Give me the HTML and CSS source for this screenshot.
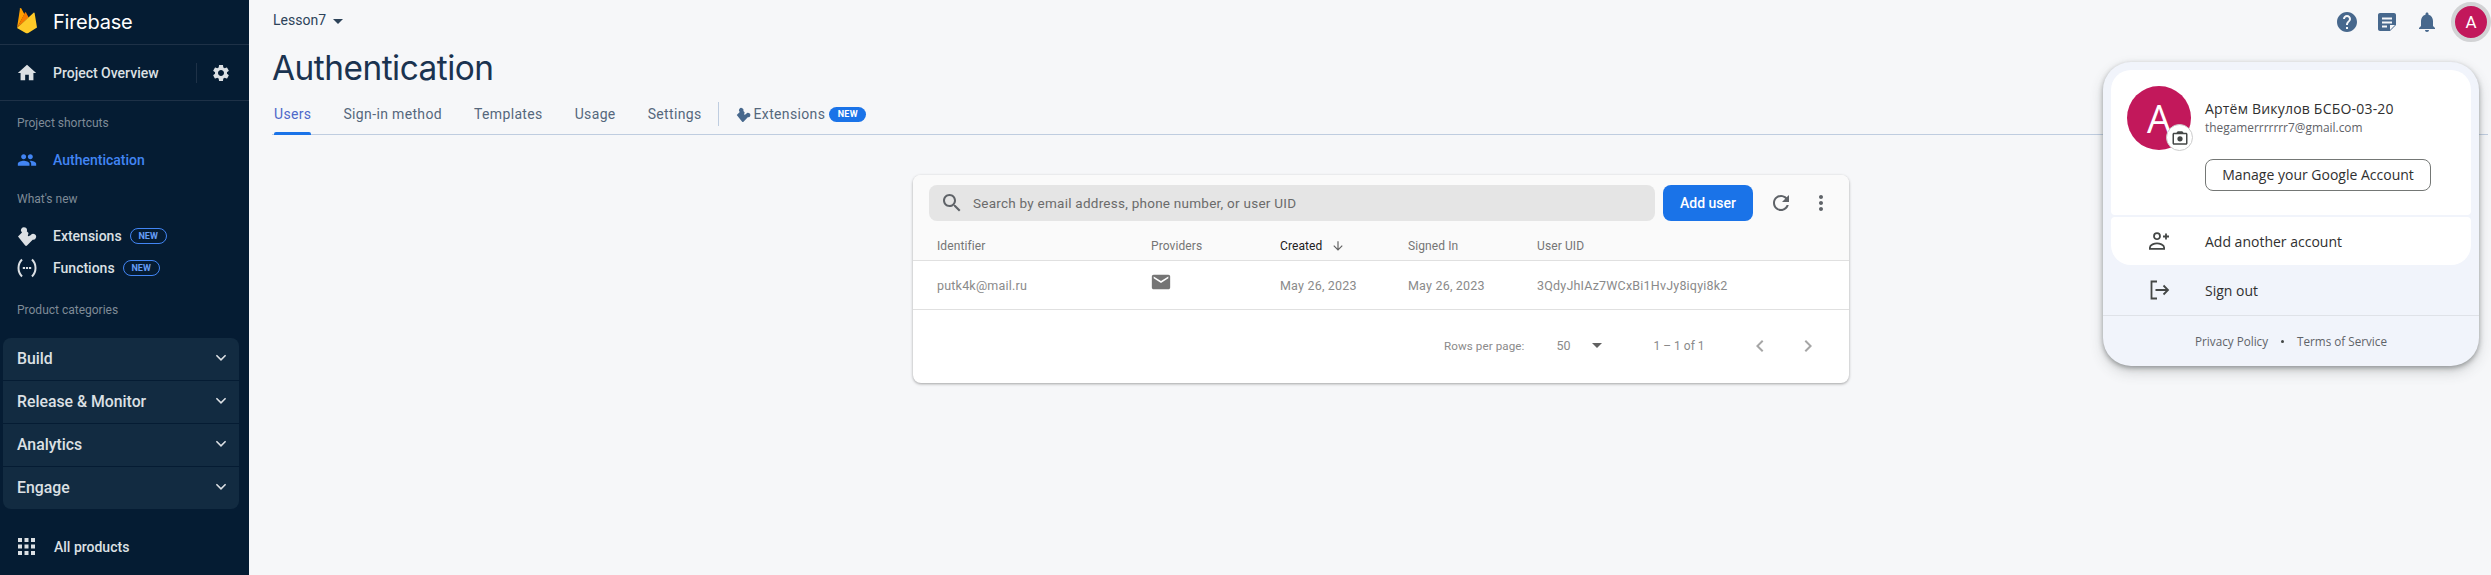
FILE: index.html
```html
<!DOCTYPE html>
<html lang="en">
<head>
<meta charset="utf-8">
<title>Authentication - Firebase</title>
<link rel="stylesheet" href="styles.css">
</head>
<body>
<div class="app">
  <aside class="sidebar">
    <div class="brand">
      <svg class="flame" viewBox="0 0 20 27" width="20" height="27"><path fill="#ffa000" d="M0 21 3 1.5c.1-.6.9-.7 1.2-.2L7.4 7.3 0 21z"/><path fill="#f57c00" d="M11.7 10.6 9 5.6c-.2-.4-.8-.4-1 0L0 21l11.7-10.4z"/><path fill="#ffca28" d="M20 20.6 17.6 6c-.1-.5-.7-.7-1-.3L0 21l8.7 4.9c.8.4 1.800.4 2.600 0L20 20.6z"/></svg>
      <span class="brand-name">Firebase</span>
    </div>
    <div class="overview">
      <svg class="icon home" viewBox="0 0 24 24"><path d="M10 20v-6h4v6h5v-8h3L12 3 2 12h3v8z"/></svg>
      <span class="overview-label">Project Overview</span>
      <span class="overview-div"></span>
      <svg class="icon gear" viewBox="0 0 24 24"><path d="M19.14 12.94c.04-.3.06-.61.06-.94 0-.32-.02-.64-.07-.94l2.03-1.58c.18-.14.23-.41.12-.61l-1.92-3.32c-.12-.22-.37-.29-.59-.22l-2.39.96c-.5-.38-1.03-.7-1.62-.94l-.36-2.54c-.04-.24-.24-.41-.48-.41h-3.84c-.24 0-.43.17-.47.41l-.36 2.54c-.59.24-1.13.57-1.62.94l-2.39-.96c-.22-.08-.47 0-.59.22L2.74 8.87c-.12.21-.08.47.12.61l2.03 1.58c-.05.3-.09.63-.09.94s.02.64.07.94l-2.03 1.58c-.18.14-.23.41-.12.61l1.92 3.32c.12.22.37.29.59.22l2.39-.96c.5.38 1.03.7 1.62.94l.36 2.54c.05.24.24.41.48.41h3.84c.24 0 .44-.17.47-.41l.36-2.54c.59-.24 1.13-.56 1.62-.94l2.39.96c.22.08.47 0 .59-.22l1.92-3.32c.12-.22.07-.47-.12-.61l-2.01-1.58zM12 15.6c-1.98 0-3.6-1.62-3.6-3.6s1.62-3.6 3.6-3.6 3.6 1.62 3.6 3.6-1.62 3.6-3.6 3.6z"/></svg>
    </div>
    <div class="side-head first">Project shortcuts</div>
    <div class="side-item active">
      <svg class="icon" viewBox="0 0 24 24"><path d="M16 11c1.66 0 2.99-1.34 2.99-3S17.66 5 16 5c-1.66 0-3 1.34-3 3s1.34 3 3 3zm-8 0c1.66 0 2.99-1.34 2.99-3S9.66 5 8 5C6.34 5 5 6.34 5 8s1.34 3 3 3zm0 2c-2.33 0-7 1.17-7 3.5V19h14v-2.5c0-2.33-4.67-3.5-7-3.500zm8 0c-.29 0-.62.02-.97.05 1.16.84 1.970 1.970 1.970 3.450V19h6v-2.500c0-2.330-4.670-3.500-7-3.500z"/></svg>
      <span>Authentication</span>
    </div>
    <div class="side-head second">What's new</div>
    <div class="side-item ext">
      <svg class="icon" viewBox="0 0 20 20"><path d="M1 10.500 5 6.500a3 3 0 1 1 4.800-1.200L11.500 7l-.7 3 .7.200 2-.9a3 3 0 1 1 2.200 4.400L10 19.500c-.6.6-1.200.6-1.800 0z"/></svg>
      <span>Extensions</span><span class="new-outline">NEW</span>
    </div>
    <div class="side-item fn">
      <svg class="icon fn-icon" viewBox="0 0 20 20"><path d="M5 1.500C2.500 4 1.500 7 1.500 10s1 6 3.500 8.500M15 1.500c2.500 2.500 3.500 5.500 3.500 8.500s-1 6-3.500 8.500M5.800 10h2.200M8.900 10h2.200M12 10h2.200"/></svg>
      <span>Functions</span><span class="new-outline">NEW</span>
    </div>
    <div class="side-head third">Product categories</div>
    <div class="accordion">
      <div class="acc-row"><span>Build</span><svg class="chev" viewBox="0 0 12 8"><path d="M1.400 1.300 6 5.900l4.600-4.600" /></svg></div>
      <div class="acc-row"><span>Release &amp; Monitor</span><svg class="chev" viewBox="0 0 12 8"><path d="M1.400 1.300 6 5.900l4.600-4.600" /></svg></div>
      <div class="acc-row"><span>Analytics</span><svg class="chev" viewBox="0 0 12 8"><path d="M1.400 1.300 6 5.900l4.600-4.600" /></svg></div>
      <div class="acc-row"><span>Engage</span><svg class="chev" viewBox="0 0 12 8"><path d="M1.400 1.300 6 5.900l4.600-4.600" /></svg></div>
    </div>
    <div class="all-products">
      <svg class="grid-icon" viewBox="0 0 17 17"><path d="M0 0h4v4H0zM6.500 0h4v4h-4zM13 0h4v4h-4zM0 6.500h4v4H0zM6.500 6.500h4v4h-4zM13 6.500h4v4h-4zM0 13h4v4H0zM6.500 13h4v4h-4zM13 13h4v4h-4z"/></svg>
      <span>All products</span>
    </div>
  </aside>

  <main class="main">
    <header class="topbar">
      <div class="project">Lesson7<span class="caret"></span></div>
      <div class="top-icons">
        <svg class="top-icon" viewBox="0 0 24 24"><path d="M12 2C6.480 2 2 6.480 2 12s4.480 10 10 10 10-4.480 10-10S17.520 2 12 2zm1 17h-2v-2h2v2zm2.070-7.750l-.9.920C13.450 12.900 13 13.500 13 15h-2v-.5c0-1.100.45-2.100 1.170-2.830l1.240-1.260c.37-.36.59-.86.59-1.410 0-1.100-.9-2-2-2s-2 .9-2 2H8c0-2.210 1.790-4 4-4s4 1.790 4 4c0 .88-.36 1.680-.93 2.250z"/></svg>
        <svg class="top-icon" viewBox="0 0 24 24"><path fill-rule="evenodd" d="M5 3h14c1.100 0 2 .9 2 2v10l-6 6H5c-1.100 0-2-.9-2-2V5c0-1.100.9-2 2-2zm2 4.500V9.500h10v-2H7zm0 4v2h10v-2H7zm0 4v2h5v-2H7zM15 20l5-5h-5v5z"/></svg>
        <svg class="top-icon" viewBox="0 0 24 24"><path d="M12 22c1.100 0 2-.9 2-2h-4c0 1.100.89 2 2 2zm6-6v-5c0-3.070-1.640-5.640-4.500-6.320V4c0-.83-.67-1.500-1.500-1.500s-1.500.67-1.500 1.500v.68C7.630 5.360 6 7.920 6 11v5l-2 2v1h16v-1l-2-2z"/></svg>
        <div class="top-avatar">A</div>
      </div>
    </header>
    <h1 class="title">Authentication</h1>
    <nav class="tabs">
      <a class="tab current">Users</a>
      <a class="tab">Sign-in method</a>
      <a class="tab">Templates</a>
      <a class="tab">Usage</a>
      <a class="tab">Settings</a>
      <span class="tab-div"></span>
      <a class="tab ext-tab">
        <svg class="tab-ext" viewBox="0 0 20 20"><path d="M1 10.500 5 6.500a3 3 0 1 1 4.800-1.200L11.500 7l-.7 3 .7.200 2-.9a3 3 0 1 1 2.200 4.400L10 19.500c-.6.6-1.200.6-1.800 0z"/></svg>
        Extensions<span class="new-fill">NEW</span>
      </a>
    </nav>

    <section class="card">
      <div class="card-top">
        <div class="toolbar">
          <div class="search">
            <svg class="search-icon" viewBox="0 0 24 24"><path d="M15.500 14h-.79l-.28-.27C15.410 12.590 16 11.110 16 9.500 16 5.910 13.090 3 9.500 3S3 5.910 3 9.500 5.910 16 9.500 16c1.610 0 3.090-.59 4.230-1.570l.27.28v.79l5 4.990L20.490 19l-4.990-5zm-6 0C7.010 14 5 11.990 5 9.500S7.010 5 9.500 5 14 7.010 14 9.500 11.990 14 9.500 14z"/></svg>
            <span>Search by email address, phone number, or user UID</span>
          </div>
          <button class="add-user">Add user</button>
          <svg class="tool refresh" viewBox="0 0 24 24"><path d="M17.650 6.350C16.200 4.900 14.210 4 12 4c-4.420 0-7.990 3.580-7.990 8s3.570 8 7.990 8c3.730 0 6.840-2.550 7.730-6h-2.080c-.82 2.330-3.040 4-5.650 4-3.310 0-6-2.690-6-6s2.690-6 6-6c1.660 0 3.140.69 4.220 1.780L13 11h7V4l-2.350 2.350z"/></svg>
          <svg class="tool dots" viewBox="0 0 24 24"><path d="M12 8c1.100 0 2-.9 2-2s-.9-2-2-2-2 .9-2 2 .9 2 2 2zm0 2c-1.100 0-2 .9-2 2s.9 2 2 2 2-.9 2-2-.9-2-2-2zm0 6c-1.100 0-2 .9-2 2s.9 2 2 2 2-.9 2-2-.9-2-2-2z"/></svg>
        </div>
        <div class="row head">
          <span class="c1">Identifier</span>
          <span class="c2">Providers</span>
          <span class="c3 sorted">Created<svg class="sort" viewBox="0 0 24 24"><path d="M20 12l-1.410-1.410L13 16.170V4h-2v12.170l-5.580-5.590L4 12l8 8 8-8z"/></svg></span>
          <span class="c4">Signed In</span>
          <span class="c5">User UID</span>
        </div>
      </div>
      <div class="row body">
        <span class="c1">putk4k@mail.ru</span>
        <span class="c2"><svg class="mail" viewBox="0 0 24 24"><path d="M20 4H4c-1.100 0-1.990.9-1.990 2L2 18c0 1.100.9 2 2 2h16c1.100 0 2-.9 2-2V6c0-1.100-.9-2-2-2zm0 4l-8 5-8-5V6l8 5 8-5v2z"/></svg></span>
        <span class="c3">May 26, 2023</span>
        <span class="c4">May 26, 2023</span>
        <span class="c5">3QdyJhIAz7WCxBi1HvJy8iqyi8k2</span>
      </div>
      <div class="pager">
        <span class="rpp">Rows per page:</span>
        <span class="rpp-val">50</span><span class="rpp-caret"></span>
        <span class="range">1 – 1 of 1</span>
        <svg class="page-arrow prev" viewBox="0 0 24 24"><path d="M15.410 7.410 14 6l-6 6 6 6 1.410-1.410L10.830 12z"/></svg>
        <svg class="page-arrow" viewBox="0 0 24 24"><path d="M10 6 8.590 7.410 13.170 12l-4.580 4.590L10 18l6-6z"/></svg>
      </div>
    </section>
  </main>

  <div class="account">
    <div class="acct-main">
      <div class="acct-avatar">A
        <span class="cam"><svg viewBox="0 0 24 24"><path fill-rule="evenodd" d="M9 3 7.200 5H4c-1.100 0-2 .9-2 2v12c0 1.100.9 2 2 2h16c1.100 0 2-.9 2-2V7c0-1.100-.9-2-2-2h-3.200L15 3H9zM4 7h16v12H4V7zm8 2.500a3.500 3.500 0 1 0 0 7 3.500 3.500 0 0 0 0-7z"/></svg></span>
      </div>
      <div class="acct-info">
        <div class="acct-name">Артём Викулов БСБО-03-20</div>
        <div class="acct-mail">thegamerrrrrrr7@gmail.com</div>
        <div class="manage">Manage your Google Account</div>
      </div>
    </div>
    <div class="acct-add">
      <svg class="acct-icon" viewBox="0 0 24 24"><path fill="none" stroke="#444746" stroke-width="1.800" d="M10 4.200a3 3 0 1 1 0 6 3 3 0 0 1 0-6zM2.900 19.900v-1.500c0-2.600 4.700-4 7.100-4s7.100 1.400 7.100 4v1.500H2.900zM19 4.500v6M16 7.500h6"/></svg>
      <span>Add another account</span>
    </div>
    <div class="acct-out">
      <svg class="acct-icon" viewBox="0 0 24 24"><path fill="none" stroke="#444746" stroke-width="1.800" d="M10 3.500H4.500v17H10M8.500 12H21M16.500 7.500 21 12l-4.500 4.500"/></svg>
      <span>Sign out</span>
    </div>
    <div class="acct-foot"><span>Privacy Policy</span><i class="dot"></i><span>Terms of Service</span></div>
  </div>
</div>
</body>
</html>
```
FILE: styles.css
```css
* { box-sizing: border-box; }
html, body { margin: 0; height: 100%; overflow: hidden; }
body { font-family: Roboto, "Liberation Sans", sans-serif; background: #f6f7f9; }
.app { display: flex; height: 575px; width: 2491px; position: relative; }
.icon { width: 20px; height: 20px; fill: currentColor; flex: none; }

.sidebar { width: 249px; flex: none; background: #051c33; color: #dce0e4; display: flex; flex-direction: column; }
.brand { height: 45px; display: flex; align-items: center; padding-left: 17px; border-bottom: 1px solid #1e3147; }
.flame { flex: none; margin-top: -4px; }
.brand-name { margin-left: 16px; font-family: Inter, Roboto, sans-serif; font-size: 20px; color: #fff; letter-spacing: -.25px; }
.overview { height: 56px; display: flex; align-items: center; padding-left: 16px; border-bottom: 1px solid #1e3147; }
.overview .home { width: 22px; height: 22px; }
.overview-label { margin-left: 15px; font-size: 14px; font-weight: 500; width: 143px; }
.overview-div { width: 1px; height: 20px; background: #1e3147; }
.overview .gear { margin-left: 14px; width: 20px; height: 20px; }
.side-head { padding-left: 17px; font-size: 12px; line-height: 16px; color: #7f8b97; }
.side-head.first { margin-top: 14px; }
.side-head.second { margin-top: 15px; }
.side-head.third { margin-top: 18px; }
.side-item { display: flex; align-items: center; padding-left: 17px; font-size: 14px; font-weight: 500; height: 32px; }
.side-item > span:first-of-type { margin-left: 16px; }
.side-item .icon { width: 20px; height: 20px; }
.side-item.active { color: #4285f4; margin-top: 13px; }
.side-item.ext { margin-top: 13px; }
.side-item .fn-icon { fill: none; stroke: currentColor; stroke-width: 2; }
.new-outline { margin-left: 8px; width: 37px; height: 16px; border: 1px solid #4285f4; border-radius: 8px; color: #669df6; font-size: 9px; font-weight: 700; text-align: center; line-height: 14px; }

.accordion { margin: 20px 10px 0 3px; background: #122b41; border-radius: 8px; overflow: hidden; }
.acc-row { height: 43px; display: flex; align-items: center; justify-content: space-between; padding: 0 12px 2px 14px; font-size: 15.800px; font-weight: 500; color: #dce0e4; border-bottom: 1px solid #051c33; }
.acc-row:last-child { border-bottom: 0; height: 42px; }
.chev { width: 12px; height: 8px; fill: none; stroke: #dce0e4; stroke-width: 1.600; }
.all-products { display: flex; align-items: center; padding-left: 18px; margin-top: 29px; font-size: 14px; font-weight: 500; }
.grid-icon { width: 17px; height: 17px; fill: #dce0e4; flex: none; }
.all-products span { margin-left: 19px; }

.main { flex: 1; min-width: 0; color: #1c3a57; }
.topbar { height: 44px; display: flex; align-items: center; justify-content: space-between; padding: 0 0 0 24px; }
.project { font-size: 14px; color: #2d4359; display: flex; align-items: center; padding-bottom: 4px; }
.caret { margin-left: 7px; border: 5px solid transparent; border-top-color: #2d4359; border-bottom: 0; margin-top: 2px; }
.top-icons { display: flex; align-items: center; }
.top-icon { width: 24px; height: 24px; fill: #47688d; margin-left: 16px; flex: none; }
.top-avatar { margin-left: 12px; width: 40px; height: 40px; background: #c2185b; border: 4px solid #d2d3d5; border-radius: 50%; color: #fff; font-size: 17px; display: flex; align-items: center; justify-content: center; }

.title { margin: 5px 0 0 23px; font-family: Inter, Roboto, sans-serif; font-weight: 400; font-size: 33.400px; line-height: 38px; color: #1a3350; letter-spacing: -.5px; }
.tabs { margin: 11px 3px 0 23px; height: 37px; display: flex; align-items: center; border-bottom: 1px solid #bfcde0; font-size: 14px; color: #55677c; font-weight: 400; padding-bottom: 4px; }
.tab { margin-right: 32px; position: relative; letter-spacing: .35px; }
.tab.current { color: #4e68c9; margin-left: 2px; }
.tab.current::after { content: ""; position: absolute; left: 0; right: 0; bottom: -13px; height: 3px; background: #1a73e8; border-radius: 2px 2px 0 0; }
.tab-div { width: 1px; height: 24px; background: #bfcde0; margin: 0 17px 0 -16px; }
.ext-tab { display: flex; align-items: center; margin-right: 0; }
.tab-ext { width: 15px; height: 15px; fill: #47688d; margin-right: 3px; flex: none; }
.new-fill { margin-left: 4px; width: 37px; height: 15px; background: #1a73e8; border-radius: 8px; color: #fff; font-size: 9px; font-weight: 700; text-align: center; line-height: 15px; letter-spacing: .2px; }

.card { margin: 40px 0 0 664px; width: 936px; background: #fff; border-radius: 8px; box-shadow: 0 1px 3px rgba(0,0,0,.35); height: 208px; color: #757575; }
.card-top { background: #fafafa; border-radius: 8px 8px 0 0; }
.toolbar { height: 58px; padding: 10px 16px 12px 16px; display: flex; align-items: center; }
.search { width: 726px; height: 36px; background: #e5e5e5; border-radius: 8px; display: flex; align-items: center; font-size: 13.500px; color: #6b6b6b; padding-left: 11px; letter-spacing: .25px; }
.search-icon { width: 24px; height: 24px; fill: #5f6368; margin-right: 9px; flex: none; }
.add-user { margin-left: 8px; width: 90px; height: 36px; border: 0; background: #1a73e8; color: #fff; border-radius: 8px; font-family: Roboto, sans-serif; font-size: 14px; font-weight: 500; padding: 0; }
.tool { flex: none; fill: #5f6368; width: 24px; height: 24px; }
.refresh { margin-left: 16px; }
.dots { margin-left: 16px; }
.row { display: grid; grid-template-columns: 214px 129px 128px 129px 1fr; padding-left: 24px; border-bottom: 1px solid #e0e0e0; align-items: center; font-size: 12px; letter-spacing: .1px; }
.row.head { height: 28px; padding-bottom: 2px; color: #757575; }
.row.body { height: 49px; color: #8a8a8a; font-size: 12.500px; letter-spacing: .2px; }
.sorted { color: #212121; display: flex; align-items: center; }
.sort { width: 14px; height: 14px; margin-left: 9px; fill: #616161; }
.mail { width: 22px; height: 22px; fill: #757575; display: block; margin: -7px 0 0 -1px; }
.pager { height: 73px; display: flex; align-items: center; font-size: 11.600px; color: #8a8a8a; padding: 0 0 2px 531px; }
.rpp { letter-spacing: .1px; }
.rpp-val { margin-left: 32px; font-size: 12.500px; }
.rpp-caret { margin-left: 21px; border: 5px solid transparent; border-top-color: #616161; border-bottom: 0; }
.range { margin-left: 52px; font-size: 12px; }
.page-arrow { width: 24px; height: 24px; fill: #a6a6a6; flex: none; }
.prev { margin-left: 43px; margin-right: 24px; }

.account { position: absolute; left: 2103px; top: 62px; width: 376px; height: 304px; background: #f1f4fb; border-radius: 28px; box-shadow: 0 2px 5px rgba(60,64,67,.45), 0 6px 14px rgba(60,64,67,.2); padding: 8px; font-family: "Open Sans", Roboto, sans-serif; color: #1f1f1f; display: flex; flex-direction: column; }
.acct-main { height: 145px; background: #fff; border-radius: 20px 20px 4px 4px; display: flex; padding: 16px 0 0 16px; flex: none; }
.acct-avatar { position: relative; width: 64px; height: 64px; border-radius: 50%; background: #c2185b; color: #fff; font-size: 38px; text-align: center; line-height: 64px; flex: none; }
.cam { position: absolute; right: -2px; bottom: -1px; width: 27px; height: 27px; background: #fff; border: 1px solid #ccc; border-radius: 50%; display: flex; align-items: center; justify-content: center; }
.cam svg { width: 18px; height: 18px; fill: #444746; }
.acct-info { margin-left: 14px; padding-top: 14px; }
.acct-name { font-size: 14px; line-height: 18px; color: #303030; letter-spacing: .2px; }
.acct-mail { margin-top: 1px; font-size: 11.900px; line-height: 16px; color: #5f6368; }
.manage { margin-top: 24px; width: 226px; height: 32px; border: 1px solid #747775; border-radius: 8px; background: #fff; font-size: 14px; line-height: 30px; text-align: center; color: #303030; }
.acct-add { margin-top: 2px; height: 48px; background: #fff; border-radius: 4px 4px 20px 20px; display: flex; align-items: center; padding-left: 36px; font-size: 14px; color: #303030; flex: none; }
.acct-icon { width: 24px; height: 24px; flex: none; margin-right: 34px; }
.acct-out { height: 50px; display: flex; align-items: center; padding-left: 36px; font-size: 14px; color: #303030; flex: none; }
.acct-foot { margin: 0 -8px -8px; border-top: 1px solid #dfe2e8; flex: 1; display: flex; align-items: center; justify-content: center; font-size: 11.700px; color: #5f6368; }
.dot { width: 3px; height: 3px; border-radius: 50%; background: #444746; margin: 0 13px; }
```
